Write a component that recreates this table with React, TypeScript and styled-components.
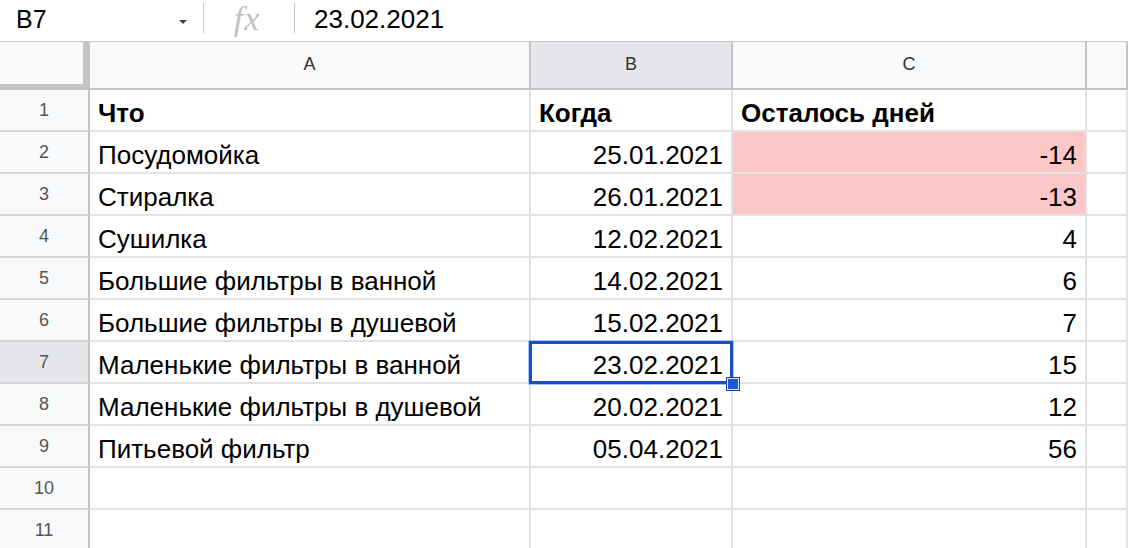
import React from "react";
import styled, { createGlobalStyle, css } from "styled-components";

const GlobalStyle = createGlobalStyle`
  html, body {
    margin: 0;
    padding: 0;
    background: #fff;
    overflow: hidden;
  }
  body {
    font-family: "Liberation Sans", Arial, sans-serif;
    color: #000;
  }
`;

type Row = {
  what: string;
  when: string;
  left: string;
  bold?: boolean;
  overdue?: boolean;
};

const rows: Row[] = [
  { what: "Что", when: "Когда", left: "Осталось дней", bold: true },
  { what: "Посудомойка", when: "25.01.2021", left: "-14", overdue: true },
  { what: "Стиралка", when: "26.01.2021", left: "-13", overdue: true },
  { what: "Сушилка", when: "12.02.2021", left: "4" },
  { what: "Большие фильтры в ванной", when: "14.02.2021", left: "6" },
  { what: "Большие фильтры в душевой", when: "15.02.2021", left: "7" },
  { what: "Маленькие фильтры в ванной", when: "23.02.2021", left: "15" },
  { what: "Маленькие фильтры в душевой", when: "20.02.2021", left: "12" },
  { what: "Питьевой фильтр", when: "05.04.2021", left: "56" },
  { what: "", when: "", left: "" },
  { what: "", when: "", left: "" },
];

const selectedRow = 7;
const columns = ["A", "B", "C", ""];

const Page = styled.div`
  width: 1128px;
  height: 548px;
  overflow: hidden;
`;

const FormulaBar = styled.div`
  display: flex;
  align-items: center;
  height: 42px;
  box-sizing: border-box;
  border-bottom: 1px solid #c7c7c7;
`;

const NameBox = styled.div`
  display: flex;
  align-items: center;
  justify-content: space-between;
  width: 203px;
  box-sizing: border-box;
  padding: 0 16px 0 16px;
  font-size: 25px;
  line-height: 26px;
  margin-top: -4px;
`;

const Caret = styled.span`
  width: 0;
  height: 0;
  border-left: 4px solid transparent;
  border-right: 4px solid transparent;
  border-top: 4px solid #444;
  margin-top: 6px;
`;

const Divider = styled.span`
  width: 1px;
  height: 30px;
  margin-top: -6px;
  background: #c9c9c9;
`;

const Fx = styled.span`
  width: 90px;
  height: 40px;
  display: flex;
  align-items: center;
  justify-content: center;
  padding-right: 4px;
  box-sizing: border-box;
  font-family: "Liberation Serif", "Times New Roman", serif;
  font-style: italic;
  font-size: 34px;
  line-height: 40px;
  color: #c2c2c2;
  margin-top: -4px;
  letter-spacing: 1px;
`;

const FormulaValue = styled.span`
  padding-left: 19px;
  font-size: 26px;
  line-height: 26px;
  margin-top: -4px;
`;

const Sheet = styled.div`
  display: grid;
  grid-template-columns: 90px 441px 202px 354px 1fr;
  grid-template-rows: 48px repeat(11, 42px);
`;

const Corner = styled.div`
  box-sizing: border-box;
  background: #f8f9fa;
  border-right: 7px solid #c4c4c4;
  border-bottom: 6px solid #c4c4c4;
`;

const ColumnHeader = styled.div<{ $active?: boolean }>`
  display: flex;
  align-items: center;
  justify-content: center;
  box-sizing: border-box;
  background: ${(p) => (p.$active ? "#e6e7ea" : "#f8f9fa")};
  border-right: 2px solid #c4c4c4;
  border-bottom: 2px solid #c4c4c4;
  padding-bottom: 2px;
  font-size: 18px;
  color: #333;
`;

const RowHeader = styled.div<{ $active?: boolean }>`
  display: flex;
  align-items: center;
  justify-content: center;
  box-sizing: border-box;
  background: ${(p) => (p.$active ? "#e6e7ea" : "#f8f9fa")};
  border-right: 2px solid #c4c4c4;
  border-bottom: 2px solid #d6d6d6;
  font-size: 18px;
  color: #555;
`;

const Cell = styled.div<{ $align?: "left" | "right"; $bold?: boolean; $overdue?: boolean }>`
  position: relative;
  display: flex;
  align-items: flex-end;
  justify-content: ${(p) => (p.$align === "right" ? "flex-end" : "flex-start")};
  box-sizing: border-box;
  padding: 0 8px 4px 8px;
  border-right: 2px solid #e2e2e2;
  border-bottom: 2px solid #e2e2e2;
  font-size: 26px;
  line-height: 26px;
  white-space: nowrap;
  font-weight: ${(p) => (p.$bold ? 700 : 400)};
  ${(p) =>
    p.$overdue &&
    css`
      background: #fcc7c6;
    `}
`;

const Selection = styled.div`
  position: absolute;
  z-index: 2;
  left: -2px;
  top: -1px;
  right: -2px;
  bottom: -2px;
  border: 3px solid #1a4fc4;
  box-shadow: 0 0 0 1px #a9c6f5;
  pointer-events: none;
`;

const Handle = styled.span`
  position: absolute;
  right: -9px;
  bottom: -9px;
  width: 10px;
  height: 10px;
  background: #1a5ad8;
  border: 1px solid #dfe9fb;
  box-shadow: 0 0 0 1px #1a3fa0;
`;

export default function App() {
  return (
    <Page>
      <GlobalStyle />
      <FormulaBar>
        <NameBox>
          <span>B7</span>
          <Caret />
        </NameBox>
        <Divider />
        <Fx>fx</Fx>
        <Divider />
        <FormulaValue>23.02.2021</FormulaValue>
      </FormulaBar>
      <Sheet>
        <Corner />
        {columns.map((c) => (
          <ColumnHeader key={c || "D"} $active={c === "B"}>
            {c}
          </ColumnHeader>
        ))}
        {rows.map((r, i) => {
          const n = i + 1;
          return (
            <React.Fragment key={n}>
              <RowHeader $active={n === selectedRow}>{n}</RowHeader>
              <Cell $bold={r.bold}>{r.what}</Cell>
              <Cell $bold={r.bold} $align={r.bold ? "left" : "right"}>
                {r.when}
                {n === selectedRow && (
                  <Selection>
                    <Handle />
                  </Selection>
                )}
              </Cell>
              <Cell $bold={r.bold} $align={r.bold ? "left" : "right"} $overdue={r.overdue}>
                {r.left}
              </Cell>
              <Cell />
            </React.Fragment>
          );
        })}
      </Sheet>
    </Page>
  );
}
